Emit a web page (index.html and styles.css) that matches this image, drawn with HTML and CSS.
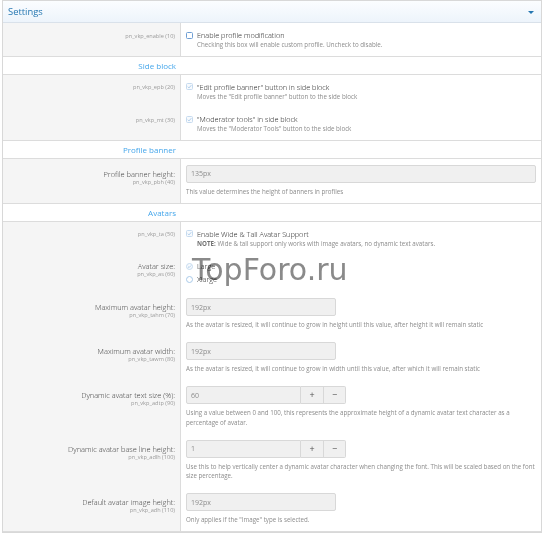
FILE: index.html
```html
<!DOCTYPE html>
<html lang="en">
<head>
<meta charset="utf-8">
<title>Settings</title>
<link rel="stylesheet" href="styles.css">
</head>
<body>
<div class="block">
  <div class="block-header">
    <span class="block-title">Settings</span>
    <span class="toggle"></span>
  </div>

  <div class="group">
    <div class="row row-check">
      <div class="row-label"><div class="hint">pn_vkp_enable (10)</div></div>
      <div class="row-main">
        <div class="check">
          <svg class="cb" viewBox="0 0 7 7" width="7" height="7"><rect x="0.5" y="0.5" width="6" height="6" rx="1" fill="#fff" stroke="#6f9fd4"/></svg>
          <span>Enable profile modification</span>
        </div>
        <div class="desc">Checking this box will enable custom profile. Uncheck to disable.</div>
      </div>
    </div>
  </div>

  <div class="section"><span>Side block</span></div>

  <div class="group">
    <div class="row row-check">
      <div class="row-label"><div class="hint">pn_vkp_epb (20)</div></div>
      <div class="row-main">
        <div class="check">
          <svg class="cb" viewBox="0 0 7 7" width="7" height="7"><rect x="0.5" y="0.5" width="6" height="6" rx="1" fill="#f7fafd" stroke="#c6dbef"/><path d="M1.8 3.7 L3 4.9 L5.3 2.2" fill="none" stroke="#9dc2e6" stroke-width="0.8"/></svg>
          <span>"Edit profile banner" button in side block</span>
        </div>
        <div class="desc">Moves the "Edit profile banner" button to the side block</div>
      </div>
    </div>
    <div class="row row-check">
      <div class="row-label"><div class="hint">pn_vkp_mt (30)</div></div>
      <div class="row-main">
        <div class="check">
          <svg class="cb" viewBox="0 0 7 7" width="7" height="7"><rect x="0.5" y="0.5" width="6" height="6" rx="1" fill="#f7fafd" stroke="#c6dbef"/><path d="M1.8 3.7 L3 4.9 L5.3 2.2" fill="none" stroke="#9dc2e6" stroke-width="0.8"/></svg>
          <span>"Moderator tools" in side block</span>
        </div>
        <div class="desc">Moves the "Moderator Tools" button to the side block</div>
      </div>
    </div>
  </div>

  <div class="section"><span>Profile banner</span></div>

  <div class="group">
    <div class="row row-input">
      <div class="row-label">
        <div class="label">Profile banner height:</div>
        <div class="hint">pn_vkp_pbh (40)</div>
      </div>
      <div class="row-main">
        <input class="input" type="text" value="135px" readonly>
        <div class="desc">This value determines the height of banners in profiles</div>
      </div>
    </div>
  </div>

  <div class="section"><span>Avatars</span></div>

  <div class="group">
    <div class="row row-check">
      <div class="row-label"><div class="hint">pn_vkp_ta (50)</div></div>
      <div class="row-main">
        <div class="check">
          <svg class="cb" viewBox="0 0 7 7" width="7" height="7"><rect x="0.5" y="0.5" width="6" height="6" rx="1" fill="#f7fafd" stroke="#c6dbef"/><path d="M1.8 3.7 L3 4.9 L5.3 2.2" fill="none" stroke="#9dc2e6" stroke-width="0.8"/></svg>
          <span>Enable Wide &amp; Tall Avatar Support</span>
        </div>
        <div class="desc"><b>NOTE:</b> Wide &amp; tall support only works with image avatars, no dynamic text avatars.</div>
      </div>
    </div>

    <div class="row row-radio">
      <div class="row-label">
        <div class="label">Avatar size:</div>
        <div class="hint">pn_vkp_as (60)</div>
      </div>
      <div class="row-main">
        <div class="check">
          <svg class="cb" viewBox="0 0 7 7" width="7" height="7"><circle cx="3.5" cy="3.5" r="3" fill="#f7fafd" stroke="#c6dbef"/><path d="M2 3.6 L3.1 4.6 L5 2.5" fill="none" stroke="#9dc2e6" stroke-width="0.8"/></svg>
          <span>Large</span>
        </div>
        <div class="check">
          <svg class="cb" viewBox="0 0 7 7" width="7" height="7"><circle cx="3.5" cy="3.5" r="3" fill="#fff" stroke="#a9c9e8"/></svg>
          <span>Xlarge</span>
        </div>
      </div>
    </div>

    <div class="row row-input">
      <div class="row-label">
        <div class="label">Maximum avatar height:</div>
        <div class="hint">pn_vkp_tahm (70)</div>
      </div>
      <div class="row-main">
        <input class="input short" type="text" value="192px" readonly>
        <div class="desc">As the avatar is resized, it will continue to grow in height until this value, after height it will remain static</div>
      </div>
    </div>

    <div class="row row-input">
      <div class="row-label">
        <div class="label">Maximum avatar width:</div>
        <div class="hint">pn_vkp_tawm (80)</div>
      </div>
      <div class="row-main">
        <input class="input short" type="text" value="192px" readonly>
        <div class="desc">As the avatar is resized, it will continue to grow in width until this value, after which it will remain static</div>
      </div>
    </div>

    <div class="row row-input">
      <div class="row-label">
        <div class="label">Dynamic avatar text size (%):</div>
        <div class="hint">pn_vkp_adtp (90)</div>
      </div>
      <div class="row-main">
        <div class="spin">
          <input class="input spin-input" type="text" value="60" readonly>
          <button class="spin-btn" type="button">+</button>
          <button class="spin-btn last" type="button">&minus;</button>
        </div>
        <div class="desc">Using a value between 0 and 100, this represents the approximate height of a dynamic avatar text character as a percentage of avatar.</div>
      </div>
    </div>

    <div class="row row-input">
      <div class="row-label">
        <div class="label">Dynamic avatar base line height:</div>
        <div class="hint">pn_vkp_adlh (100)</div>
      </div>
      <div class="row-main">
        <div class="spin">
          <input class="input spin-input" type="text" value="1" readonly>
          <button class="spin-btn" type="button">+</button>
          <button class="spin-btn last" type="button">&minus;</button>
        </div>
        <div class="desc">Use this to help vertically center a dynamic avatar character when changing the font. This will be scaled based on the font size percentage.</div>
      </div>
    </div>

    <div class="row row-input">
      <div class="row-label">
        <div class="label">Default avatar image height:</div>
        <div class="hint">pn_vkp_adh (110)</div>
      </div>
      <div class="row-main">
        <input class="input short" type="text" value="192px" readonly>
        <div class="desc">Only applies if the "Image" type is selected.</div>
      </div>
    </div>
  </div>

  <div class="watermark">TopForo.ru</div>
</div>
</body>
</html>
```

FILE: styles.css
```css
* {
  box-sizing: border-box;
}

html, body {
  margin: 0;
  padding: 0;
  background: #fff;
}

body {
  font-family: "Open Sans", "Noto Sans", sans-serif;
  color: #1e1e1e;
}

.block {
  position: relative;
  margin: 0 4px 0 2px;
  border: 1px solid #d8d8d8;
  background: #fff;
}

.block-header {
  height: 22px;
  display: flex;
  align-items: center;
  justify-content: space-between;
  padding: 0 7px 0 5px;
  background: linear-gradient(#fbfdff, #edf4fb);
  border-bottom: 1px solid #d9e1ea;
}

.block-title {
  font-size: 9.4px;
  color: #2577b1;
  line-height: 12px;
}

.toggle {
  width: 0;
  height: 0;
  border-left: 3px solid transparent;
  border-right: 3px solid transparent;
  border-top: 3.5px solid #2577b1;
  margin-top: 2px;
}

.group {
  border-bottom: 1px solid #dcdcdc;
}

.section {
  height: 18px;
  border-bottom: 1px solid #dcdcdc;
  display: grid;
  grid-template-columns: 178px;
}

.section span {
  text-align: right;
  padding-right: 5px;
  font-size: 8px;
  line-height: 17px;
  color: #47a7eb;
}

.row {
  display: grid;
  grid-template-columns: 178px 1fr;
}

.row-label {
  background: #f5f5f5;
  border-right: 1px solid #dcdcdc;
  text-align: right;
  padding-right: 5px;
}

.row-main {
  padding-left: 5px;
  padding-right: 5px;
}

.label {
  font-size: 7.4px;
  line-height: 10px;
  font-weight: 300;
  color: #3c3c3c;
}

.hint {
  font-size: 5.6px;
  line-height: 7px;
  color: #9a9a9a;
}

.row-check .row-label {
  padding-top: 8.5px;
}

.row-check .row-label .hint {
  line-height: 8px;
}

.row-check .row-main {
  padding-top: 7px;
  padding-bottom: 6.5px;
}

.check {
  display: flex;
  align-items: center;
  gap: 4px;
  height: 10px;
  font-size: 7.3px;
  font-weight: 300;
  color: #222;
}

.cb {
  display: block;
  flex: none;
}

.desc {
  font-size: 6.2px;
  line-height: 9px;
  color: #8c8c8c;
}

.desc b {
  font-weight: 700;
  color: #707070;
}

.row-check .desc {
  padding-left: 11px;
}

.row-radio .row-label {
  padding-top: 7px;
}

.row-radio .row-main {
  padding-top: 7px;
  padding-bottom: 8px;
  display: flex;
  flex-direction: column;
  gap: 3px;
}

.row-input .row-label {
  padding-top: 10px;
}

.row-input .row-main {
  padding-top: 6px;
  padding-bottom: 6.5px;
}

.row-input .desc {
  margin-top: 4px;
  line-height: 9.5px;
}

.input {
  display: block;
  width: 100%;
  height: 18px;
  margin: 0;
  padding: 0 0 0 4px;
  border: 1px solid #d8d8d8;
  border-radius: 2px;
  background: #f0f0f0;
  font-family: inherit;
  font-size: 7px;
  color: #8c8c8c;
  outline: none;
}

.input.short {
  width: 150px;
}

.spin {
  display: flex;
  width: 160px;
  height: 18px;
}

.spin-input {
  width: 115px;
  border-radius: 2px 0 0 2px;
}

.spin-btn {
  width: 23px;
  height: 18px;
  margin: 0;
  padding: 0;
  border: 1px solid #d8d8d8;
  border-left: none;
  background: #f0f0f0;
  font-family: inherit;
  font-size: 9px;
  line-height: 16px;
  color: #505050;
}

.spin-btn.last {
  width: 22px;
  border-radius: 0 2px 2px 0;
}

.watermark {
  position: absolute;
  left: 189px;
  top: 254px;
  font-family: "DejaVu Sans", sans-serif;
  font-size: 30px;
  line-height: 30px;
  color: #8a8a8a;
  mix-blend-mode: multiply;
  pointer-events: none;
  white-space: nowrap;
}
```
